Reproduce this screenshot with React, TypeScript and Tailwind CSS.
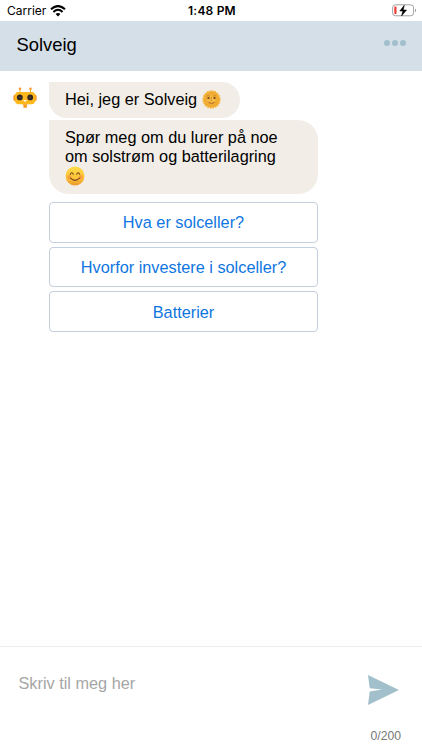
import React from "react";

const QUESTIONS = ["Hva er solceller?", "Hvorfor investere i solceller?", "Batterier"];

function WifiIcon() {
  return (
    <svg className="w-[16px] h-[12px]" viewBox="0 0 16 12" fill="none">
      <path d="M1 4.3Q8-2.2 15 4.3" stroke="#000" strokeWidth="2.1" />
      <path d="M3.4 6.9Q8 2.7 12.6 6.9" stroke="#000" strokeWidth="2" />
      <path d="M8 11.5 5.6 9Q8 7 10.4 9Z" fill="#000" />
    </svg>
  );
}

function BatteryIcon() {
  return (
    <svg className="w-[26px] h-[13px]" viewBox="0 0 26 13">
      <rect x="1.6" y="0.8" width="21" height="11" rx="3" fill="#fff" stroke="#a0a0a0" />
      <rect x="3.3" y="2.6" width="2.2" height="7.4" rx="0.8" fill="#ee3b35" />
      <path d="M24 4.5v3.8c1.4-.6 1.4-3.2 0-3.8Z" fill="#a0a0a0" />
      <path d="M13.3 1.2 8.8 7h3l-1.3 5L15.6 6h-3.3Z" fill="#000" stroke="#000" strokeWidth="0.5" />
    </svg>
  );
}

function BotAvatar() {
  return (
    <svg className="w-[24px] h-[22px]" viewBox="0 0 24 22">
      <path d="M7 2v5M17.5 2v5" stroke="#f4ad32" strokeWidth="1" />
      <circle cx="7" cy="1.7" r="1.3" fill="#f59b2a" />
      <circle cx="17.5" cy="1.7" r="1.3" fill="#f59b2a" />
      <rect x="0.4" y="7.5" width="23.2" height="6.8" rx="2" fill="#f7981d" />
      <path d="M5 5h14q3.2 0 3.2 4v4.5q0 3.700-3.700 3.700H5.700Q2 17.200 2 13.500V9Q2 5 5 5Z" fill="#fdb71f" />
      <path d="M9.500 17.200h5.200l-.9 1v2.600h-3.400v-2.600Z" fill="#f7981d" />
      <circle cx="6.8" cy="10.4" r="2.9" fill="#302820" />
      <circle cx="17.2" cy="10.4" r="2.9" fill="#302820" />
      <circle cx="6.8" cy="10.4" r="0.7" fill="#67513b" />
      <circle cx="17.2" cy="10.4" r="0.7" fill="#67513b" />
      <path d="M10.100 13q1.900 3.400 3.800 0Z" fill="#fff" />
    </svg>
  );
}

function SunFace() {
  return (
    <svg className="w-[19px] h-[19px]" viewBox="0 0 19 19">
      <defs>
        <radialGradient id="sun">
          <stop offset="0" stopColor="#fbc64c" />
          <stop offset="1" stopColor="#eda42c" />
        </radialGradient>
      </defs>
      <circle cx="9.5" cy="9.5" r="8.5" fill="#f4b63c" stroke="#f2b33c" strokeWidth="1.4" strokeDasharray="1.6 1.07" />
      <circle cx="9.5" cy="9.5" r="7.3" fill="url(#sun)" />
      <path d="M4.700 6.200q1.700-1.200 3.200 0M11.100 6.200q1.600-1.200 3.200 0M9.500 6.800l-.7 3.500h1.300" stroke="#bd7522" strokeWidth="0.7" fill="none" />
      <ellipse cx="6.5" cy="7.900" rx="1.200" ry="1" fill="#70451d" />
      <ellipse cx="12.500" cy="7.900" rx="1.200" ry="1" fill="#70451d" />
      <path d="M6.500 12.300q3 2.500 6 0" stroke="#b05f21" strokeWidth="1" fill="none" />
    </svg>
  );
}

function SmileFace() {
  return (
    <svg className="w-[20px] h-[20px]" viewBox="0 0 20 20">
      <defs>
        <linearGradient id="smile" x2="0" y2="1">
          <stop offset="0" stopColor="#ffdc45" />
          <stop offset="0.6" stopColor="#fcc33a" />
          <stop offset="1" stopColor="#ed982b" />
        </linearGradient>
        <radialGradient id="blush">
          <stop offset="0" stopColor="#f67b3d" stopOpacity="0.75" />
          <stop offset="1" stopColor="#f67b3d" stopOpacity="0" />
        </radialGradient>
      </defs>
      <circle cx="10" cy="10" r="9.5" fill="url(#smile)" />
      <circle cx="4.200" cy="11" r="3" fill="url(#blush)" />
      <circle cx="15.800" cy="11" r="3" fill="url(#blush)" />
      <path d="M5.300 8.300q1.500-3 3 0M11.700 8.300q1.500-3 3 0M5.500 12.200q4.500 4.300 9 0" stroke="#71421b" strokeWidth="1.100" strokeLinecap="round" fill="none" />
    </svg>
  );
}

export default function App() {
  return (
    <div className="w-[422px] h-[750px] flex flex-col bg-white overflow-hidden text-black font-['Liberation_Sans',Arial,sans-serif]">
      <div className="h-[21px] shrink-0 grid grid-cols-3 items-center pl-[7px] pr-[5px] text-black font-[Inter,sans-serif]">
        <div className="flex items-center gap-[4px] text-[12px] leading-none">
          Carrier <WifiIcon />
        </div>
        <span className="text-center text-[12px] leading-none font-semibold tracking-[0.2px]">1:48 PM</span>
        <div className="flex justify-end">
          <BatteryIcon />
        </div>
      </div>

      <header className="h-[50px] shrink-0 flex items-center justify-between pl-[16.5px] pr-[16px] bg-[#d5dfe8]">
        <h1 className="text-[18.4px] leading-[18px] pb-[2px]">Solveig</h1>
        <button aria-label="Meny" className="flex gap-[2px] mb-[6px]">
          <span className="size-[6px] rounded-full bg-[#a3bfce]" />
          <span className="size-[6px] rounded-full bg-[#a3bfce]" />
          <span className="size-[6px] rounded-full bg-[#a3bfce]" />
        </button>
      </header>

      <main className="flex-1 flex items-start pl-[13px] pt-[11px]">
        <div className="w-[36px] pt-[5px] shrink-0">
          <BotAvatar />
        </div>
        <div className="w-[269px] flex flex-col items-start text-[16.3px] leading-[19px]">
          <div className="w-[191px] h-[36px] flex items-center gap-[5px] pl-[16px] pb-[1px] rounded-r-[18px] rounded-bl-[18px] bg-[#f2eee7] whitespace-nowrap">
            Hei, jeg er Solveig <SunFace />
          </div>
          <div className="w-full h-[74px] mt-[2px] pt-[8px] pl-[16px] rounded-r-[20px] rounded-bl-[20px] bg-[#f2eee7] whitespace-nowrap">
            <p>Spør meg om du lurer på noe</p>
            <p>om solstrøm og batterilagring</p>
            <SmileFace />
          </div>
          <div className="w-full mt-[8px] flex flex-col gap-[4px]">
            {QUESTIONS.map((question) => (
              <button key={question} className="h-[40.7px] pt-[1px] border border-[#c3cfdc] rounded-[4px] text-[#0f76e0]">
                {question}
              </button>
            ))}
          </div>
        </div>
      </main>

      <footer className="h-[104px] shrink-0 flex justify-between border-t border-[#ececec] pl-[18.5px] pr-[21px]">
        <span className="pt-[27px] text-[16.3px] leading-[19px] text-[#a6a6a6]">Skriv til meg her</span>
        <div className="flex flex-col items-end pt-[28px]">
          <button aria-label="Send" className="mr-[2px]">
            <svg className="w-[31px] h-[30px]" viewBox="0 0 31 30">
              <path d="M0 0 31 15 0 30 1.700 16.400 14 14.600 1.700 13.200Z" fill="#a2bfcc" />
            </svg>
          </button>
          <span className="mt-[24px] text-[12.2px] leading-[14px] text-[#777]">0/200</span>
        </div>
      </footer>
    </div>
  );
}
